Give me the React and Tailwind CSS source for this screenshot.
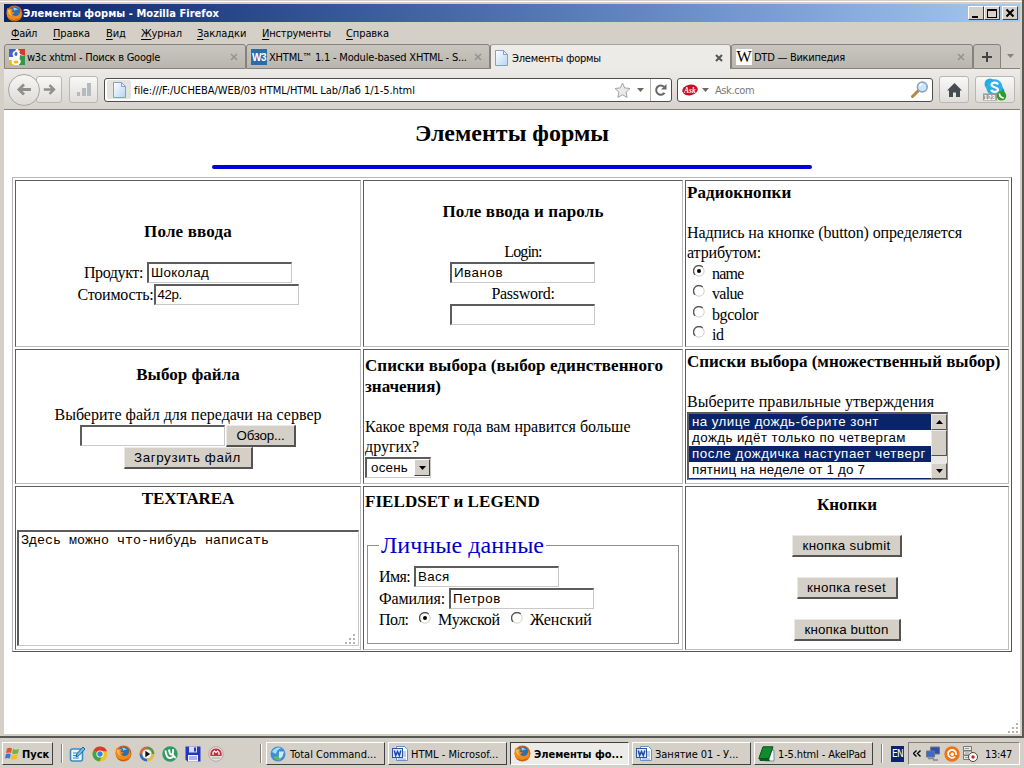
import { createElement } from "react";

const UI = "font-['DejaVu_Sans_Condensed','DejaVu_Sans',sans-serif] text-[11px] leading-[14px] whitespace-pre pt-0.5";
const H3 = "font-bold text-[17px] leading-5 whitespace-nowrap";
const RAISED = "border border-t-white border-l-white border-r-[#404040] border-b-[#404040] bg-[#d4d0c8]";
const SUNKEN = "border-t-2 border-r border-b border-l-2 border-t-[#5c5c5c] border-r-[#c9c9c9] border-b-[#c9c9c9] border-l-[#5c5c5c]";

/* ---------- icons ---------- */

function FirefoxIcon() {
  return (
    <svg width="17" height="17" viewBox="0 0 17 17" className="shrink-0">
      <circle cx="8.5" cy="8.5" r="8" fill="#d9620f" />
      <circle cx="8.9" cy="6.8" r="5.3" fill="#2f6fae" />
      <path d="M7 2.4c2 .2 4.3.8 5.2 2.6-1.500-.6-3.300-.3-3.600.9z" fill="#9fd0ee" />
      <path d="M1.200 3.200c.8-.2 1.600 0 2.300.7C5 3.500 6.200 4 7.200 5c-.9.200-1.500.800-1.300 1.700.6.600 1.700.4 2.700.5-.5 1.200-1.700 1.300-2.300 2 .9 1.600 3 2.200 4.900 1.500 2-.8 3.100-2.600 3-5 1.500 2 1.800 4.600.4 6.900-1.500 2.600-4.600 3.800-7.500 3C3.200 14.700.9 12 .7 8.500.6 6.600.7 4.800 1.200 3.200z" fill="#ef8a1a" />
      <path d="M2 5c1-.6 2-.4 2.800.2C4 6.500 4.200 9 6 10.600 4.500 10.500 2 9 2 5z" fill="#fbc24a" />
      <path d="M3 13c3 2.800 8 2.600 11-.8-1.500 3.400-7.500 5.600-11 .8z" fill="#b8430c" />
    </svg>
  );
}

function GoogleIcon() {
  return (
    <svg width="16" height="16" viewBox="0 0 16 16" className="shrink-0">
      <rect width="16" height="16" fill="#fff" />
      <path d="M0 0h7L4 8H0z" fill="#3e66c8" />
      <path d="M9 0h7v7l-5-2z" fill="#d8372b" />
      <path d="M11 6l5 1v9h-6z" fill="#2f9a48" />
      <path d="M0 11h9l-1 5H0z" fill="#f3b51f" />
      <path d="M11 1.500C6 1 3.500 2.500 3.500 5c0 2 1.700 3 3.800 3-.3.900-.1 1.200.3 1.600C4.600 9.800 2.500 11 2.500 13c0 2 2 3 4.500 3s4.800-1.300 4.800-3.500c0-2.400-2.900-2.700-2.900-3.800C8.900 8 10.500 7.200 10.500 5c0-1-.4-1.800-1-2.300h1.500z" fill="#fff" />
      <ellipse cx="7" cy="5" rx="1.500" ry="1.900" fill="#3e66c8" />
      <ellipse cx="7" cy="13" rx="2.500" ry="1.500" fill="#f3b51f" />
    </svg>
  );
}

function PageIcon() {
  return (
    <svg width="13" height="16" viewBox="0 0 13 16" className="shrink-0">
      <defs>
        <linearGradient id="sheet" x1="0" y1="0" x2="1" y2="1">
          <stop offset="0" stopColor="#fff" />
          <stop offset="1" stopColor="#b5d4f5" />
        </linearGradient>
      </defs>
      <path d="M.5.5h8l4 4v11H.5z" fill="url(#sheet)" stroke="#7ba2d0" />
      <path d="M8.500.5v4h4z" fill="#e8f2fd" stroke="#7ba2d0" />
    </svg>
  );
}

function Cross({ dark }) {
  return (
    <svg width="8" height="8" viewBox="0 0 8 8" className="shrink-0">
      <path d="M1 1l6 6M7 1L1 7" stroke={dark ? "#555" : "#969289"} strokeWidth={dark ? 2 : 1.500} />
    </svg>
  );
}

function Caret({ color = "#6b6862" }) {
  return (
    <svg width="7" height="4" viewBox="0 0 7 4" className="shrink-0">
      <path d="M0 0h7L3.500 4z" fill={color} />
    </svg>
  );
}

function Arrow({ left }) {
  return (
    <svg width={left ? 16 : 13} height="13" viewBox="0 0 16 14" className="shrink-0">
      <path d={left ? "M8 1.500L2.500 7 8 12.500M3 7h12.500" : "M8 1.500L13.500 7 8 12.500M13 7H1"} fill="none" stroke="#8f8f8c" strokeWidth="3" />
    </svg>
  );
}

function WordIcon() {
  return (
    <svg width="16" height="16" viewBox="0 0 16 16" className="shrink-0">
      <path d="M4.500.5h8l3 3v11h-11z" fill="#fff" stroke="#6d8fc9" />
      <path d="M11 6h3M11 8h3M11 10h3M6 13h8" stroke="#7c9bd2" />
      <rect x=".5" y="2.500" width="10" height="9" fill="#dfe9f8" stroke="#2b55a5" />
      <path d="M2.300 4.500l1.400 5 1.800-4 1.800 4 1.500-5" fill="none" stroke="#2048a0" strokeWidth="1.500" />
    </svg>
  );
}

function Radio({ on }) {
  return (
    <svg width="12" height="12" viewBox="0 0 12 12" className="shrink-0">
      <circle cx="6" cy="6" r="5.200" fill="#fff" stroke="#d4d0c8" />
      <path d="M2.100 9.900A5.400 5.400 0 0 1 9.800 2.100" fill="none" stroke="#555" strokeWidth="1.300" />
      {on && <circle cx="6" cy="6" r="2" fill="#000" />}
    </svg>
  );
}

/* ---------- browser chrome ---------- */

function CaptionButton({ children, className = "" }) {
  return (
    <div className={`flex h-3.5 w-4 items-center justify-center ${RAISED} ${className}`}>
      <svg width="12" height="11" viewBox="0 0 12 11" className="shrink-0" shapeRendering="crispEdges">{children}</svg>
    </div>
  );
}

function TitleBar() {
  return (
    <div className="flex h-[18px] items-center bg-linear-to-r from-[#0a246a] via-[#5f82c0] via-60% to-[#a6caf0] pr-0.5 pl-0.5">
      <FirefoxIcon />
      <span className={`${UI} font-bold tracking-[0.04px] text-white`}>Элементы формы - Mozilla Firefox</span>
      <div className="ml-auto flex">
        <CaptionButton><path d="M2 8h6v2H2z" /></CaptionButton>
        <CaptionButton><path d="M1.500 1h9v8.500h-9zM1 2.500h10" fill="none" stroke="#000" /></CaptionButton>
        <CaptionButton className="ml-0.5">
          <path d="M2.500 1.500l7 7M9.500 1.500l-7 7" stroke="#000" strokeWidth="2" shapeRendering="auto" />
        </CaptionButton>
      </div>
    </div>
  );
}

function MenuItem({ first, rest, className }) {
  return (
    <span className={`${UI} shrink-0 ${className}`}>
      <span className="underline underline-offset-2">{first}</span>{rest}
    </span>
  );
}

function MenuBar() {
  return (
    <div className="flex h-[22px] items-center pl-[7px]">
      <MenuItem first="Ф" rest="айл" className="w-[42px] tracking-[-0.3px]" />
      <MenuItem first="П" rest="равка" className="w-[53px] tracking-[-0.1px]" />
      <MenuItem first="В" rest="ид" className="w-[35px] tracking-[-0.1px]" />
      <MenuItem first="Ж" rest="урнал" className="w-14 tracking-[-0.1px]" />
      <MenuItem first="З" rest="акладки" className="w-[65px] tracking-[-0.1px]" />
      <MenuItem first="И" rest="нструменты" className="w-[84px] tracking-[-0.17px]" />
      <MenuItem first="С" rest="правка" className="tracking-[-0.1px]" />
    </div>
  );
}

function Tab({ icon, label, className = "", active }) {
  return (
    <div
      className={`flex h-full shrink-0 items-center rounded-t-[3px] border border-[#85827b] pt-px pr-[7px] pl-1 ${active ? "border-b-0 border-t-[#a5a29b] bg-[#ecebe8]" : "bg-linear-to-b from-[#c9c6bf] to-[#b9b6af]"} ${className}`}
    >
      {icon}
      <span className={`${UI} ml-0.5 grow ${active ? "pl-0.5" : ""}`}>{label}</span>
      <Cross dark={active} />
    </div>
  );
}

function TabStrip() {
  return (
    <div className="flex h-[25px] border-b-0">
      <Tab className="w-[242px] tracking-[-0.25px]" icon={<GoogleIcon />} label="w3c xhtml - Поиск в Google" />
      <Tab
        className="w-[244px] tracking-[-0.2px]"
        icon={
          <span className="flex size-4 shrink-0 items-center justify-center bg-[#2a6ba8] font-['Liberation_Sans',sans-serif] text-[10px] font-bold tracking-tighter text-white">W3</span>
        }
        label="XHTML™ 1.1 - Module-based XHTML - S..."
      />
      <Tab active className="w-[241px] tracking-[-0.23px]" icon={<PageIcon />} label="Элементы формы" />
      <Tab
        className="w-[242px] tracking-[-0.26px]"
        icon={
          <span className="flex size-4 shrink-0 items-center justify-center bg-white font-['Liberation_Serif',serif] text-[16px] leading-4 tracking-normal">W</span>
        }
        label="DTD — Википедия"
      />
      <div className="flex w-7 items-center justify-center rounded-t-[3px] border border-[#85827b] bg-[#c4c1ba]">
        <svg width="10" height="10" viewBox="0 0 10 10"><path d="M5 0v10M0 5h10" stroke="#444" strokeWidth="2" /></svg>
      </div>
      <div className="flex grow items-center justify-center border-b border-[#85827b]">
        <Caret color="#85827b" />
      </div>
    </div>
  );
}

function ToolButton({ children, className }) {
  return (
    <div className={`flex h-[27px] shrink-0 items-center justify-center rounded-[3px] border border-[#bab7b1] bg-linear-to-b from-[#f8f8f6] to-[#e0dedb] ${className}`}>
      {children}
    </div>
  );
}

function NavBar() {
  return (
    <div className="flex h-[41px] items-center border-b border-[#85827b] bg-linear-to-b from-[#ecebe8] to-[#d6d3cc] pt-px pl-1">
      <div className="z-10 flex size-8 shrink-0 items-center justify-center rounded-full border border-[#a8a5a0] bg-linear-to-b from-[#f6f6f5] to-[#dddbd8]">
        <Arrow left />
      </div>
      <ToolButton className="-ml-1 w-[26px]"><Arrow /></ToolButton>
      <ToolButton className="ml-[7px] w-[29px]">
        <svg width="14" height="13" viewBox="0 0 14 13"><path d="M0 9h3v4H0zM5 5h4v8H5zM10 0h4v13h-4z" fill="#b5b9c0" /></svg>
      </ToolButton>
      <div className="ml-1.5 flex h-6 w-[568px] shrink-0 items-center rounded-[3px] border border-[#4f4d49] bg-white pl-0.5">
        <div className="flex h-[19px] w-6 items-center justify-center rounded-[2px] bg-[#e4e3e0]"><PageIcon /></div>
        <span className={`${UI} ml-[3px] grow tracking-[-0.05px]`}>file:///F:/UCHEBA/WEB/03 HTML/HTML Lab/Лаб 1/1-5.html</span>
        <svg width="17" height="16" viewBox="0 0 17 16">
          <path d="M8.500 1l2.200 4.900 5.300.6-3.900 3.600 1 5.300-4.600-2.600-4.600 2.600 1-5.300L1 6.500l5.300-.6z" fill="#e9e9e9" stroke="#a3a3a3" />
        </svg>
        <div className="ml-1.5"><Caret /></div>
        <div className="ml-1.5 flex h-[22px] w-[21px] items-center justify-center border-l border-[#b5b3af]">
          <svg width="12" height="12" viewBox="0 0 12 12">
            <path d="M9.500 8.800A4.600 4.600 0 1 1 9 2.800" fill="none" stroke="#666" strokeWidth="2" />
            <path d="M11.500 0v5.500H6z" fill="#666" />
          </svg>
        </div>
      </div>
      <div className="ml-[5px] flex h-6 w-64 shrink-0 items-center rounded-[3px] border border-[#4f4d49] bg-white pr-[3px] pl-1">
        <svg width="16" height="12" viewBox="0 0 16 12" className="shrink-0">
          <ellipse cx="8" cy="6" rx="7.800" ry="5.300" fill="#c5111b" transform="rotate(-10 8 6)" />
          <text x="2" y="9" fontSize="7.500" fontStyle="italic" fontWeight="bold" fill="#fff" fontFamily="Liberation Serif">Ask</text>
        </svg>
        <div className="ml-1"><Caret /></div>
        <span className={`${UI} ml-1 grow pl-0.5 tracking-[-0.4px] text-[#777]`}>Ask.com</span>
        <svg width="18" height="17" viewBox="0 0 18 17" className="shrink-0">
          <path d="M1.500 15.500L8 9" stroke="#b98345" strokeWidth="3" strokeLinecap="round" />
          <circle cx="11.300" cy="6" r="4.900" fill="#cbe5fa" stroke="#8ba3c4" strokeWidth="1.600" />
          <path d="M8.500 5.500a3 3 0 0 1 3-2.500" stroke="#fff" strokeWidth="1.500" fill="none" />
        </svg>
      </div>
      <ToolButton className="ml-1.5 w-[30px]">
        <svg width="15" height="14" viewBox="0 0 15 14">
          <path d="M7.500 0L15 7.500h-2V14H9V9.500H6V14H2V7.500H0z" fill="#464b52" />
        </svg>
      </ToolButton>
      <ToolButton className="ml-1.5 w-10">
        <svg width="24" height="23" viewBox="0 0 24 23">
          <circle cx="7" cy="6" r="5.500" fill="#27a9e5" />
          <circle cx="16" cy="14" r="5.500" fill="#1689cd" />
          <circle cx="11.500" cy="9.500" r="8.200" fill="#2cafe9" />
          <path d="M15 6.500C14.300 5 12.800 4.600 11.300 4.700 9.700 4.800 8.500 5.600 8.600 7c.2 2.700 6.400 1.700 6.400 4.600 0 1.500-1.500 2.300-3.300 2.300-1.700 0-3-.6-3.600-2.100" fill="none" stroke="#fff" strokeWidth="2.200" />
          <rect x="0" y="15.500" width="14" height="7" fill="#9a9a9a" />
          <text x=".8" y="22" fontSize="7" fontWeight="bold" fill="#fff" fontFamily="Liberation Sans">123</text>
          <circle cx="18.500" cy="17.800" r="4.800" fill="#2d9e26" />
          <path d="M16.500 15.500c-.2 2.500 1.700 4.500 4.200 4.300" fill="none" stroke="#fff" strokeWidth="1.700" />
        </svg>
      </ToolButton>
    </div>
  );
}

/* ---------- page ---------- */

function Field({ children, className = "" }) {
  return (
    <span
      className={`flex h-[21px] w-[145px] shrink-0 items-center ${SUNKEN} bg-white pl-0.5 font-['Liberation_Sans',sans-serif] text-[13.33px] leading-4 ${className}`}
    >
      {children}
    </span>
  );
}

function Button({ children, className = "" }) {
  return (
    <span
      className={`flex shrink-0 items-center justify-center border-t border-r-2 border-b-2 border-l border-t-[#eceae6] border-r-[#55534f] border-b-[#55534f] border-l-[#eceae6] bg-[#d4d0c8] font-['Liberation_Sans',sans-serif] text-[13.33px] leading-4 whitespace-nowrap ${className}`}
    >
      {children}
    </span>
  );
}

function Cell({ children, className = "" }) {
  return (
    <section className={`flex min-w-0 flex-col border border-t-[#5c5c5c] border-r-[#bcbcbc] border-b-[#bcbcbc] border-l-[#5c5c5c] whitespace-nowrap ${className}`}>
      {children}
    </section>
  );
}

function RadioLine({ label, on, className }) {
  return (
    <div className={`flex h-5 items-center pl-1.5 ${className}`}>
      <span className="-mt-1.5"><Radio on={on} /></span>
      <span className="ml-[7px]">{label}</span>
    </div>
  );
}

function Option({ children, selected, className }) {
  return (
    <div className={`h-4 pl-[3px] ${selected ? "bg-[#0a246a] text-white" : ""} ${className}`}>{children}</div>
  );
}

function ScrollButton({ up }) {
  return (
    <div className="flex h-4 shrink-0 items-center justify-center border border-[#eceae6] border-r-[#55534f] border-b-[#55534f] bg-[#d4d0c8]">
      <svg width="7" height="4" viewBox="0 0 7 4"><path d={up ? "M0 4h7L3.500 0z" : "M0 0h7L3.500 4z"} /></svg>
    </div>
  );
}

function Grip() {
  return (
    <svg width="11" height="11" viewBox="0 0 11 11" shapeRendering="crispEdges" className="shrink-0">
      <path d="M8 0h2v2H8zM4 4h2v2H4zM8 4h2v2H8zM0 8h2v2H0zM4 8h2v2H4zM8 8h2v2H8z" fill="#b5b2ab" />
    </svg>
  );
}

function FormTable() {
  return (
    <div className="mx-auto mt-2 grid h-[475px] w-[1000px] shrink-0 grid-cols-[346px_320px_324px] grid-rows-[167px_135px_164px] gap-0.5 border border-t-[#b5b5b5] border-r-[#555] border-b-[#555] border-l-[#b5b5b5] p-0.5">
      <Cell className="items-center pt-[41px]">
        <h3 className={`${H3} tracking-[0.17px]`}>Поле ввода</h3>
        <div className="mt-5 flex h-[22px] items-start">
          <span className="mt-px mr-1 tracking-[-0.4px]">Продукт:</span>
          <Field className="tracking-[0.33px]">Шоколад</Field>
        </div>
        <div className="flex h-[22px] items-start">
          <span className="mt-px tracking-[-0.2px]">Стоимость:</span>
          <Field className="tracking-[-0.4px]">42р.</Field>
        </div>
      </Cell>

      <Cell className="items-center pt-[21px]">
        <h3 className={`${H3} tracking-[0.1px]`}>Поле ввода и пароль</h3>
        <div className="mt-5 tracking-[-0.9px]">Login:</div>
        <Field className="mr-px tracking-[0.54px]">Иванов</Field>
        <div className="mt-px tracking-[-0.3px]">Password:</div>
        <Field className="mr-px" />
      </Cell>

      <Cell className="pt-0.5 pl-px">
        <h3 className={`${H3} tracking-[0.1px]`}>Радиокнопки</h3>
        <div className="mt-5 tracking-[-0.12px]">Надпись на кнопке (button) определяется</div>
        <div className="tracking-[-0.1px]">атрибутом:</div>
        <RadioLine on label="name" className="mt-px tracking-[-0.8px]" />
        <RadioLine label="value" className="tracking-[-0.7px]" />
        <RadioLine label="bgcolor" className="mt-px tracking-[-0.4px]" />
        <RadioLine label="id" className="tracking-[-0.4px]" />
      </Cell>

      <Cell className="items-center pt-[15px]">
        <h3 className={`${H3} tracking-[0.03px]`}>Выбор файла</h3>
        <div className="mt-5">Выберите файл для передачи на сервер</div>
        <div className="flex h-[22px] items-start">
          <Field />
          <Button className="ml-px h-[22px] w-[70px] tracking-[-0.2px]">Обзор...</Button>
        </div>
        <Button className="h-[22px] w-[129px] tracking-[0.63px]">Загрузить файл</Button>
      </Cell>

      <Cell className="pt-1.5 pl-px">
        <h3 className={`${H3} tracking-[0.08px]`}>Списки выбора (выбор единственного</h3>
        <h3 className={`${H3} mt-px`}>значения)</h3>
        <div className="mt-5">Какое время года вам нравится больше</div>
        <div>других?</div>
        <div className={`flex h-[21px] w-[66px] ${SUNKEN} pb-px`}>
          <span className="grow pl-1 font-['Liberation_Sans',sans-serif] text-[13.33px] leading-[18px] tracking-[0.24px]">осень</span>
          <span className={`flex w-4 items-center justify-center ${RAISED}`}><Caret color="#000" /></span>
        </div>
      </Cell>

      <Cell className="pt-0.5 pl-px">
        <h3 className={H3}>Списки выбора (множественный выбор)</h3>
        <div className="mt-5 tracking-[0.07px]">Выберите правильные утверждения</div>
        <div className="flex h-[68px] w-[261px] border-t-2 border-r border-b border-l-2 border-t-[#5c5c5c] border-r-[#8f8f8f] border-b-[#8f8f8f] border-l-[#5c5c5c]">
          <div className="flex min-w-0 grow flex-col overflow-hidden font-['Liberation_Sans',sans-serif] text-[13.33px] leading-4">
            <Option selected className="tracking-[0.44px]">на улице дождь-берите зонт</Option>
            <Option className="tracking-[0.43px]">дождь идёт только по четвергам</Option>
            <Option selected className="tracking-[0.56px]">после дождичка наступает четверг</Option>
            <Option className="tracking-[0.21px]">пятниц на неделе от 1 до 7</Option>
            <div className="grow bg-[#0a246a]" />
          </div>
          <div className="flex w-4 shrink-0 flex-col bg-[#eae8e4]">
            <ScrollButton up />
            <div className="h-[26px] border border-[#eceae6] border-r-[#55534f] border-b-[#55534f] bg-[#d4d0c8]" />
            <div className="grow" />
            <ScrollButton />
          </div>
        </div>
      </Cell>

      <Cell className="pt-0.5">
        <h3 className={`${H3} text-center tracking-[-0.1px]`}>TEXTAREA</h3>
        <div className={`mt-[21px] ml-px flex h-[116px] w-[342px] justify-between ${SUNKEN} pt-px pr-0.5 pl-0.5`}>
          <span className="font-['Liberation_Mono',monospace] text-[13.33px] leading-4">Здесь можно что-нибудь написать</span>
          <span className="self-end"><Grip /></span>
        </div>
      </Cell>

      <Cell className="pt-[5px] pl-px">
        <h3 className={`${H3} tracking-[0.05px]`}>FIELDSET и LEGEND</h3>
        <fieldset className="mt-[19px] ml-0.5 h-[113px] w-[312px] border border-[#8f8f8f] pl-[11px]">
          <legend className="px-0.5 text-[24px] leading-7 tracking-[0.07px] text-[#0000cc]">Личные данные</legend>
          <div className="mt-[7px] flex h-[22px] items-start">
            <span className="mt-px mr-1 tracking-[-0.6px]">Имя:</span>
            <Field className="tracking-[0.3px]">Вася</Field>
          </div>
          <div className="flex h-[22px] items-start">
            <span className="mt-px mr-1 tracking-[-0.1px]">Фамилия:</span>
            <Field className="tracking-[0.57px]">Петров</Field>
          </div>
          <div className="flex h-[22px] items-start">
            <span className="w-10 tracking-[-0.6px]">Пол:</span>
            <span className="mt-0.5"><Radio on /></span>
            <span className="ml-[7px] w-[73px] tracking-[-0.14px]">Мужской</span>
            <span className="mt-0.5"><Radio /></span>
            <span className="ml-[7px] tracking-[0.12px]">Женский</span>
          </div>
        </fieldset>
      </Cell>

      <Cell className="items-center pt-2">
        <h3 className={H3}>Кнопки</h3>
        <Button className="mt-5 h-[22px] w-[110px] tracking-[0.28px]">кнопка submit</Button>
        <Button className="mt-5 h-[22px] w-[101px] tracking-[0.36px]">кнопка reset</Button>
        <Button className="mt-5 h-[22px] w-[107px] tracking-[0.14px]">кнопка button</Button>
      </Cell>
    </div>
  );
}

/* ---------- taskbar ---------- */

function Task({ icon, label, active, className = "" }) {
  return (
    <div
      className={`flex h-[23px] w-[119px] shrink-0 items-center gap-[3px] border pl-[3px] ${active ? "border-[#404040] border-r-white border-b-white bg-[#ecebe7] font-bold" : "border-white border-r-[#404040] border-b-[#404040] bg-[#d4d0c8]"} ${className}`}
    >
      {icon}
      <span className={UI}>{label}</span>
    </div>
  );
}

function Divider({ className }) {
  return <div className={`h-[19px] w-0.5 shrink-0 border-r border-l border-r-white border-l-[#85827b] ${className}`} />;
}

function QuickLaunch() {
  return (
    <div className="flex items-center gap-[7px]">
      <svg width="16" height="16" viewBox="0 0 16 16">
        <rect x="1.500" y="3" width="12" height="12" rx="2" fill="#eaf6ff" stroke="#3a8cc4" strokeWidth="1.600" />
        <path d="M4 7h5M4 9.500h4M4 12h6" stroke="#3a8cc4" />
        <path d="M7 11l1-3.500L14 1l2 2-6 6.500z" fill="#6fc0ea" stroke="#1d5f94" />
      </svg>
      <svg width="16" height="16" viewBox="0 0 16 16">
        <circle cx="8" cy="8" r="7.500" fill="#f4c21c" />
        <path d="M8 8L1.500 4.250A7.500 7.500 0 0 1 15 5.200H8z" fill="#dc3b2c" />
        <path d="M8 8L1.500 4.250A7.500 7.500 0 0 0 7.500 15.500L10 10z" fill="#3fa54a" />
        <circle cx="8" cy="8" r="3.600" fill="#fff" />
        <circle cx="8" cy="8" r="2.700" fill="#3f80d6" />
      </svg>
      <FirefoxIcon />
      <svg width="16" height="16" viewBox="0 0 16 16">
        <path d="M8 .5A7.500 7.500 0 0 1 15.500 8H8z" fill="#4d9a3c" />
        <path d="M8 .5A7.500 7.500 0 0 0 .5 8H8z" fill="#d3653a" />
        <path d="M.5 8A7.500 7.500 0 0 0 8 15.500V8z" fill="#3669b8" />
        <path d="M8 15.500A7.500 7.500 0 0 0 15.500 8H8z" fill="#efbb2d" />
        <circle cx="8" cy="8" r="4.800" fill="#f5f5f0" stroke="#999" strokeWidth=".6" />
        <path d="M6.300 4.800L11.200 8l-4.900 3.200z" fill="#111" />
      </svg>
      <svg width="16" height="16" viewBox="0 0 16 16">
        <circle cx="8" cy="8" r="7.700" fill="#2f9a63" />
        <path d="M3.500 4.500c.3 3.500 1 7.500 4.500 7.500 1.600 0 2.500-.7 3-1.500M7 3.500c.4 2.800.8 5 2.300 5S11.500 6.500 11 3.200M11 8.500c.6 2 1.500 3 2.800 3" fill="none" stroke="#fff" strokeWidth="2" />
      </svg>
      <svg width="16" height="16" viewBox="0 0 16 16">
        <path d="M.5.5h15v15h-13l-2-2z" fill="#2536c5" />
        <path d="M4 .5h8v6H4z" fill="#d8dcf2" />
        <path d="M9 1.500h2v4H9z" fill="#2536c5" />
        <path d="M3 9h10v6.500H3z" fill="#f1f2fa" />
        <path d="M4 11h8M4 13h8" stroke="#6a74cc" />
      </svg>
      <svg width="16" height="16" viewBox="0 0 16 16">
        <circle cx="8" cy="8" r="7.300" fill="#e3dedd" stroke="#b5a5a5" />
        <path d="M2.500 10C1.500 6 4 2.500 8 2.500s6.500 3.500 5.500 7.500z" fill="#c9303a" />
        <path d="M5 9V6.500l1.500-1.500L8 6.500 9.500 5 11 6.500V9" fill="none" stroke="#fff" strokeWidth="1.200" />
        <path d="M4 12h8" stroke="#aaa" />
      </svg>
    </div>
  );
}

function Taskbar() {
  return (
    <div className="flex h-[30px] items-center border-t border-[#d4d0c8] bg-[#d4d0c8] pl-0.5">
      <div className={`flex h-[23px] w-[51px] shrink-0 items-center gap-0.5 pl-0.5 ${RAISED}`}>
        <svg width="15" height="15" viewBox="0 0 15 15" className="shrink-0">
          <path d="M2 2.500C4 1.300 5.500 1.600 7 2.500L6 7C4.500 6.200 3 6.200 1 7z" fill="#e2552a" />
          <path d="M8 3c2 1 4 1 6-.3L13 7.200c-2 1-4 1-6 .2z" fill="#72b536" />
          <path d="M.9 8C2.500 7.200 4.300 7.300 5.800 8l-1 4.500C3.300 11.700 1.800 11.700 0 12.500z" fill="#3d76d6" />
          <path d="M6.800 8.400c2 .9 4 .8 6-.1l-1 4.500c-2 1.100-4 1-6 .1z" fill="#f3bd28" />
        </svg>
        <span className={`${UI} font-bold`}>Пуск</span>
      </div>
      <Divider className="ml-2" />
      <div className="ml-1.5"><QuickLaunch /></div>
      <Divider className="ml-9" />
      <div className="ml-1 flex gap-[3px]">
        <Task
          label="Total Command..."
          icon={
            <svg width="17" height="16" viewBox="0 0 17 16" className="shrink-0">
              <circle cx="8" cy="8" r="7.500" fill="#3d8ed2" />
              <path d="M2 6c2-4 6-5.500 9.500-4C8 3 6.500 5 6 8z" fill="#a8dcf5" />
              <path d="M9 5.500h5l-1.500 5-4 3.500z" fill="#cfe9f7" />
              <path d="M3 11c2 3 5 4 8 3l-3-4z" fill="#5fb56a" />
            </svg>
          }
        />
        <Task icon={<WordIcon />} label="HTML - Microsof..." />
        <Task active icon={<FirefoxIcon />} label="Элементы фо..." />
        <Task className="tracking-[-0.05px]" icon={<WordIcon />} label="Занятие 01 - У..." />
        <Task
          className="tracking-[-0.14px]"
          label="1-5.html - AkelPad"
          icon={
            <svg width="17" height="16" viewBox="0 0 17 16" className="shrink-0">
              <path d="M8 4h8v11H7z" fill="#f4f8fb" stroke="#6f8fae" />
              <path d="M5 .8h10L11 12.500H.8z" fill="#128a2f" stroke="#0a4f1a" />
              <path d="M.8 12.500H11l1 2.500H2z" fill="#0b5c1f" />
            </svg>
          }
        />
      </div>
      <Divider className="ml-2" />
      <div className="ml-2 flex h-4 w-[13px] shrink-0 items-center justify-center bg-[#0a246a] font-['DejaVu_Sans_Condensed','DejaVu_Sans',sans-serif] text-[10px] leading-[14px] tracking-[-0.8px] text-white">EN</div>
      <div className="ml-1 flex h-[23px] w-28 shrink-0 items-center border border-[#85827b] border-r-white border-b-white pl-1">
        <svg width="8" height="7" viewBox="0 0 8 7" className="shrink-0">
          <path d="M3.500.5l-3 3 3 3M7.500.5l-3 3 3 3" fill="none" stroke="#000" strokeWidth="1.400" />
        </svg>
        <svg width="16" height="15" viewBox="0 0 16 15" className="ml-1 shrink-0">
          <path d="M5.500 1h9v7h-9z" fill="#2c4fb0" stroke="#6b7687" />
          <path d="M1.500 5h8v6h-8z" fill="#3c68d0" stroke="#6b7687" />
          <path d="M3 12.500h6M8 14h5" stroke="#7d8794" strokeWidth="1.500" />
        </svg>
        <svg width="16" height="16" viewBox="0 0 16 16" className="ml-[3px] shrink-0">
          <circle cx="8" cy="8" r="7.700" fill="#ee7415" />
          <path d="M11 10.500A4 4 0 1 1 12 7.500V9" fill="none" stroke="#fff" strokeWidth="1.800" />
          <circle cx="8.300" cy="8.200" r="1.700" fill="#fff" />
        </svg>
        <svg width="16" height="16" viewBox="0 0 16 16" className="ml-0.5 shrink-0">
          <path d="M1.500.5h8v4h-8zM1.500 5h8v4h-8zM1.500 9.500h6v4h-6z" fill="#e8e8e5" stroke="#777" />
          <path d="M3 2.500h4M3 7h4M3 11.500h3" stroke="#999" />
          <circle cx="11" cy="11" r="4.500" fill="#fff" stroke="#444" />
          <circle cx="11" cy="11" r="1.700" fill="#d11f1f" />
        </svg>
        <span className={`${UI} ml-[7px] tracking-[-0.3px]`}>13:47</span>
      </div>
    </div>
  );
}

export default function App() {
  return (
    <div className="flex h-[768px] w-[1024px] flex-col overflow-hidden bg-[#d4d0c8] text-black">
      <div className="flex h-[738px] w-[1024px] flex-col border-r-2 border-b-2 border-[#5a5853]">
        <div className="mt-px flex min-h-0 grow flex-col border-t border-white pt-0.5 pr-0.5 pb-0.5 pl-1">
          <TitleBar />
          <MenuBar />
          <TabStrip />
          <NavBar />
          <main className="-ml-1 flex min-h-0 grow flex-col border-l-4 border-[#d4d0c8] bg-white font-['Liberation_Serif',serif] text-base leading-5">
            <h1 className="mt-[9px] text-center text-[24px] leading-7 font-bold">Элементы формы</h1>
            <div className="mx-auto mt-[18px] h-1 w-[600px] shrink-0 rounded-full bg-[#0000d8]" />
            <FormTable />
            <div className="mt-auto mr-px self-end"><Grip /></div>
          </main>
        </div>
      </div>
      <Taskbar />
    </div>
  );
}
